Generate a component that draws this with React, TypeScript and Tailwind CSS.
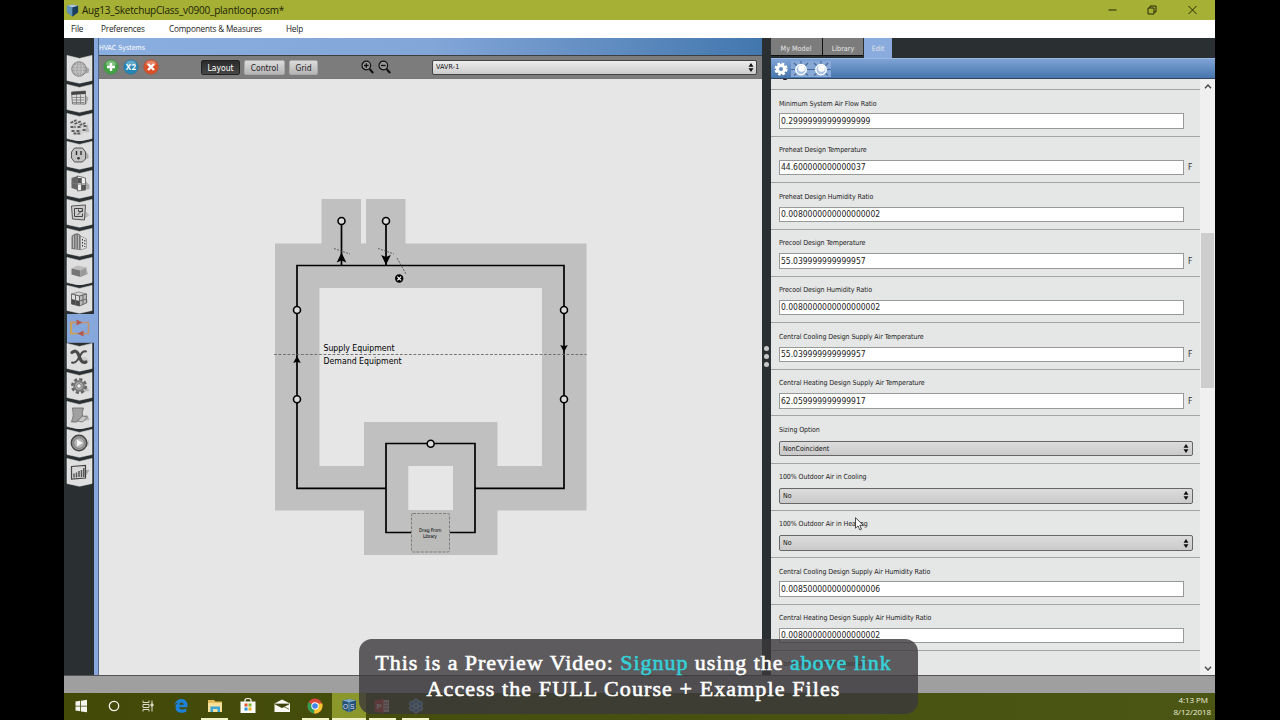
import type { ReactNode } from "react";

type Field = {
  label: string;
  value: string;
  unit?: string;
  select?: boolean;
};

const fields: Field[] = [
  { label: "Minimum System Air Flow Ratio", value: "0.29999999999999999" },
  { label: "Preheat Design Temperature", value: "44.600000000000037", unit: "F" },
  { label: "Preheat Design Humidity Ratio", value: "0.0080000000000000002" },
  { label: "Precool Design Temperature", value: "55.039999999999957", unit: "F" },
  { label: "Precool Design Humidity Ratio", value: "0.0080000000000000002" },
  { label: "Central Cooling Design Supply Air Temperature", value: "55.039999999999957", unit: "F" },
  { label: "Central Heating Design Supply Air Temperature", value: "62.059999999999917", unit: "F" },
  { label: "Sizing Option", value: "NonCoincident", select: true },
  { label: "100% Outdoor Air in Cooling", value: "No", select: true },
  { label: "100% Outdoor Air in Heating", value: "No", select: true },
  { label: "Central Cooling Design Supply Air Humidity Ratio", value: "0.0085000000000000006" },
  { label: "Central Heating Design Supply Air Humidity Ratio", value: "0.0080000000000000002" },
];

// side tab drawings, 25x28 each, centred on (12, 14)
const tabIcons: ReactNode[] = [
  <g key="site">
    <path d="M14 19l7-1 1-4-5-3z" fill="#aaa" />
    <circle cx="11.5" cy="14" r="7.3" fill="#a5a5a5" stroke="#777" strokeWidth=".8" />
    <path d="M5 11h13M4.500 14h14M5 17h13M9 7.500q-3 6 0 13M14 7.500q3 6 0 13M11.500 7v14" stroke="#d0d0d0" strokeWidth=".7" fill="none" />
  </g>,
  <g key="schedules">
    <path d="M17 10l4 4-2 6-3 1z" fill="#aaa" />
    <path d="M4 8l14-1v13H5z" fill="#ddd" stroke="#666" strokeWidth=".8" />
    <path d="M4 8l14-1v3L4 11z" fill="#444" />
    <path d="M5 13.500h12M5 16h12M5 18.500h12M9 11v9M13 11v9" stroke="#777" strokeWidth=".8" />
  </g>,
  <g key="constructions">
    <path d="M15 20l7-1-2-8z" fill="#bbb" />
    <path d="M4 10l6-3 8 3v10l-6 2-8-3z" fill="#d5d5d5" />
    <path d="M3 10l6-3M7 11l7-3M12 12l6-2M3 14h5M10 14h4M16 13h3M4 18h3M9 18h4M15 17h4M6 20.500h7" stroke="#5f5f5f" strokeWidth="1.800" strokeDasharray="3 .8" />
  </g>,
  <g key="loads">
    <path d="M14 20l7-3v-3l-4-5z" fill="#aaa" />
    <path d="M7 7h8l3 4v7l-3 3H7l-3-4v-6z" fill="#c3c3c3" stroke="#555" />
    <path d="M9 10v4M13.500 10v4" stroke="#222" strokeWidth="1.300" />
    <circle cx="11" cy="17.300" r="1.300" fill="#333" />
  </g>,
  <g key="spaces">
    <path d="M16 20l6-1v-4l-4-4z" fill="#aaa" />
    <path d="M4 8l6-2v14l-6-2z" fill="#666" />
    <path d="M10 6l8 2v12l-8 1z" fill="#eee" stroke="#555" strokeWidth=".8" />
    <path d="M4 13l6 1M14 8v12M10 14h8" stroke="#777" />
    <path d="M14 15h4v5h-4zM10.500 8h3v5h-3z" fill="#555" />
  </g>,
  <g key="geometry">
    <path d="M17 20l5-4-4-4z" fill="#bbb" />
    <path d="M4 7l14-1-1 15-12-1z" fill="#ccc" stroke="#555" />
    <path d="M7 9.500h8v3h-4v-2M7 9.500v8h8v-3M10 16l5-5" fill="none" stroke="#444" />
  </g>,
  <g key="facility">
    <path d="M4 8q5-5 9-1v15l-9-1z" fill="#777" />
    <path d="M13 8l6 3v9l-6 2z" fill="#ddd" stroke="#777" strokeWidth=".6" />
    <path d="M6 8v12M8.500 7v14M11 7v14" stroke="#c9c9c9" strokeWidth=".8" />
    <path d="M15 11v9M17.300 12v7" stroke="#333" strokeDasharray="1.500 1.500" />
  </g>,
  <g key="spacetype">
    <path d="M17 18l4-1-2-4z" fill="#bbb" />
    <path d="M4 11.500l6-3 9 2-6 3z" fill="#bcbcbc" />
    <path d="M4 11.500l9 2v6.500l-9-2.500z" fill="#757575" />
    <path d="M19 10.500l-6 3V20l6-2.500z" fill="#999" />
  </g>,
  <g key="zones">
    <path d="M17 19l4-2-2-4z" fill="#bbb" />
    <path d="M4 9l7-2 8 2-7 2z" fill="#d5d5d5" stroke="#666" strokeWidth=".6" />
    <path d="M4 9l8 2v10l-8-2z" fill="#ddd" stroke="#555" strokeWidth=".8" />
    <path d="M12 11l7-2v9l-7 3z" fill="#bbb" stroke="#555" strokeWidth=".8" />
    <path d="M4 14l8 2v5l-8-2z" fill="#4c4c4c" />
    <path d="M8 10v10M15.500 10v10M12 16l7-2" stroke="#666" />
  </g>,
  <g key="hvac" fill="none">
    <path d="M7 8.500H3.500v11H8" stroke="#c9a25c" strokeWidth="2.200" />
    <path d="M13 8.500h8v11h-6M8 19.500h3" stroke="#c7936f" strokeWidth="1.500" />
    <path d="M3 8.500h6" stroke="#c7936f" strokeWidth="1.500" />
    <path d="M9 5.500l6 3-6 3zM16 16.500l-6 3 6 3z" fill="#b55b4b" />
  </g>,
  <g key="variables">
    <path d="M13 19l9-1-4-4-5 1z" fill="#ccc" />
    <path d="M4.500 9.500q4-3 6 1l2.500 6q1.500 4 5.500 2.500" fill="none" stroke="#4a4a4a" strokeWidth="3.200" strokeLinecap="round" />
    <path d="M18.500 8.500q-3-1-5.500 3.500l-3 5q-2.500 3.500-5.500 2.500" fill="none" stroke="#4a4a4a" strokeWidth="2" strokeLinecap="round" />
  </g>,
  <g key="settings">
    <path d="M14 20l8-1-4-7z" fill="#bbb" />
    <circle cx="11.500" cy="14" r="6.700" fill="none" stroke="#666" strokeWidth="2.600" strokeDasharray="3.200 2.062" />
    <circle cx="11.500" cy="14" r="4.700" fill="#bbb" stroke="#777" strokeWidth="2" />
    <circle cx="11.500" cy="14" r="2.300" fill="#eee" stroke="#555" strokeWidth=".7" />
  </g>,
  <g key="scripts">
    <path d="M14 20l8-1-2-5-6 1z" fill="#b5b5b5" />
    <path d="M5 7h11q-2 4-1 9l-6 5H4q3-6 1-14z" fill="#a0a0a0" stroke="#666" strokeWidth=".8" />
    <path d="M10 20l5-5 5 1-5 5z" fill="#c9c9c9" stroke="#666" strokeWidth=".8" />
  </g>,
  <g key="run">
    <path d="M14 22l7-6v-5z" fill="#aaa" />
    <circle cx="11.500" cy="14" r="7.700" fill="#999" stroke="#444" strokeWidth="1.400" />
    <circle cx="11.500" cy="14" r="5.300" fill="#b5b5b5" stroke="#777" strokeWidth=".8" />
    <path d="M9.500 10.500l6 3.500-6 3.500z" fill="#f4f4f4" />
  </g>,
  <g key="results">
    <path d="M17 20l5-8h-4z" fill="#aaa" />
    <path d="M4 8.500l14-1V20l-14 1z" fill="#d8d8d8" stroke="#444" strokeWidth="1.200" />
    <path d="M6.500 19.500v-4M9 19.500v-5M11.500 19v-6M14 19v-7M16.300 19v-9" stroke="#555" strokeWidth="1.500" />
  </g>,
];

const SideTab = ({ icon, active }: { icon: ReactNode; active: boolean }) => (
  <svg className="block h-[28.8px] w-[30px]" viewBox="0 0 30 28.800">
    {active ? (
      <path d="M3 0h27v28.800H3z" fill="#86a8dc" />
    ) : (
      <path d="M3 .400l12.500 3L28 .400v25.100L15.500 28.300 3 25.500z" fill="#dfdfdf" stroke="#f5f5f5" strokeWidth=".5" />
    )}
    <g transform="translate(3.500 0)">{icon}</g>
  </svg>
);

const Spinner = () => (
  <svg className="h-[9px] w-[6px]" viewBox="0 0 6 9">
    <path d="M3 0l2.500 3.700h-5zM3 9l2.500-3.700h-5z" fill="#111" />
  </svg>
);

const Node = ({ x, y }: { x: number; y: number }) => (
  <circle cx={x} cy={y} r="3.500" fill="#dcdcdc" stroke="#000" strokeWidth="1.600" />
);

const AirLoop = () => (
  <svg className="block h-[596px] w-full" viewBox="99 79 663 596" fontFamily="'DejaVu Sans Condensed', 'Noto Sans', sans-serif">
    <path
      fill="#c0c0c0"
      fillRule="evenodd"
      d="M275 243.500h46.500V199H361v44.500h5V199h39.500v44.500h181v267h-89V555H364v-44.500h-89zM319.500 288v178H364v-44h133.500v44H542V288zM408.300 466v44H453v-44z"
    />
    <g fill="none" stroke="#000" strokeWidth="1.700">
      <path d="M386 488.300H297V265.500h267v222.800h-89" />
      <path d="M411 532.500h-25v-89h89v89h-25" />
      <path d="M341.500 221v45M386 221v45" />
    </g>
    <path d="M341.500 252.500l4.800 10-4.800-2-4.800 2zM386 265l4.800-10-4.800 2-4.800-2zM297 356l3.800 7-3.800-1.300-3.800 1.300zM564 352l3.800-7-3.800 1.300-3.800-1.300z" />
    <g fill="none" stroke="#555" strokeWidth=".9" strokeDasharray="2 1.200">
      <path d="M334 248.500l16 5.500M378 248.500l16 5.500M397 258l9 16" />
    </g>
    <path d="M274 354.500h312.500" stroke="#666" strokeWidth=".9" strokeDasharray="2.800 1.700" />
    <Node x={341.500} y={221} />
    <Node x={386} y={221} />
    <Node x={297} y={310} />
    <Node x={564} y={310} />
    <Node x={297} y={399.300} />
    <Node x={564} y={399.300} />
    <Node x={430.700} y={443.700} />
    <circle cx="399.200" cy="278.500" r="4.200" />
    <path d="M397.300 276.600l3.800 3.800M401.100 276.600l-3.800 3.800" stroke="#fff" strokeWidth="1.300" />
    <rect x="411.500" y="513.500" width="38" height="38.500" rx="1.500" fill="#bbbcba" stroke="#777" strokeWidth=".9" strokeDasharray="3 1.300" />
    <g fontSize="8.700">
      <text x="323.500" y="351" textLength="71">Supply Equipment</text>
      <text x="323.500" y="364" textLength="78">Demand Equipment</text>
    </g>
    <g fontSize="5">
      <text x="419" y="532" textLength="22.500">Drag From</text>
      <text x="423" y="538" textLength="14">Library</text>
    </g>
  </svg>
);

const FieldRow = ({ label, value, unit, select }: Field) => (
  <div
    className={
      select
        ? "flex h-[47.200px] shrink-0 flex-col border-b border-[#a4a4a4] pl-[8px]"
        : "flex h-[46.650px] shrink-0 flex-col border-b border-[#a4a4a4] pl-[8px]"
    }
  >
    <span className="mt-[7.500px] h-[15.800px] text-[7px] leading-[13px] tracking-[-0.080px] whitespace-nowrap text-[#222]">{label}</span>
    {select ? (
      <div className="mt-[1.200px] flex h-[15.500px] w-[414px] items-center justify-between rounded-[2px] border border-[#666] bg-gradient-to-b from-[#dcdcdc] to-[#cacaca] pr-[3px] pl-[3px] text-[7px] leading-none text-[#111]">
        <span className="pt-[1px]">{value}</span>
        <Spinner />
      </div>
    ) : (
      <div className="flex items-center">
        <div className="flex h-[15.500px] w-[405px] items-center border border-[#999] bg-white pl-[1px] text-[8.500px] leading-none tracking-[-0.030px] text-[#222]">
          {value}
        </div>
        <span className="ml-[4px] text-[8.500px] leading-none text-[#333]">{unit}</span>
      </div>
    )}
  </div>
);

const RoundButton = ({ fill, edge, children }: { fill: string; edge: string; children: ReactNode }) => (
  <svg className="h-[16px] w-[16px]" viewBox="0 0 16 16">
    <circle cx="8" cy="8" r="7.300" fill={fill} stroke={edge} strokeWidth=".7" />
    <ellipse cx="8" cy="4.500" rx="5" ry="3" fill="#fff" opacity=".3" />
    {children}
  </svg>
);

const Zoomer = ({ plus }: { plus?: boolean }) => (
  <svg className="h-[14px] w-[13px]" viewBox="0 0 13 14" fill="none" stroke="#111">
    <circle cx="5.300" cy="5.500" r="4.300" strokeWidth="1.200" fill="#999" />
    <path d="M8.500 9l3.700 4" strokeWidth="2" />
    <path d="M3 5.500h4.600" strokeWidth="1.400" />
    {plus && <path d="M5.300 3.200v4.600" strokeWidth="1.400" />}
  </svg>
);

const Bulb = () => (
  <svg className="h-[16px] w-[20px] bg-[#88a9d5]" viewBox="0 0 20 16">
    <path d="M0 8.500h4M16 8.500h4M3 2l3 3M17 2l-3 3M10 0v3M3 14.500L6 12M17 14.500L14 12" stroke="#426a9f" strokeWidth="1.200" />
    <circle cx="10" cy="8.700" r="5.200" fill="#a9c2e3" stroke="#fff" strokeWidth="1.400" />
    <circle cx="10.500" cy="7.500" r="3.300" fill="#fff" />
  </svg>
);

const Cube = () => (
  <svg className="h-[14px] w-[13px]" viewBox="0 0 14 14">
    <path d="M1 2.500L7 1l6 1.500v7L7 14l-6-4.500z" fill="#2e5e86" />
    <path d="M1 2.500L7 4v10L1 9.500z" fill="#5f93ba" />
    <path d="M7 4l6-1.500v7L7 14z" fill="#1c3d5c" />
    <path d="M1 2.500L7 1l6 1.500L7 4z" fill="#b5cbdb" />
  </svg>
);

const taskIcons: { name: string; art: ReactNode; open?: boolean; active?: boolean }[] = [
  { name: "start", art: <path d="M4.500 5.500l4.700-.7v4.900H4.500zM10 4.700l6-.9v5.900h-6zM4.500 10.500h4.700v4.800l-4.700-.7zM10 10.500h6v5.800l-6-.9z" fill="#f5f5f0" /> },
  { name: "cortana", art: <circle cx="10" cy="10" r="4.700" fill="none" stroke="#f5f5f0" strokeWidth="1.300" /> },
  {
    name: "taskview",
    art: (
      <g fill="none" stroke="#dcdcca">
        <path d="M5 4.500v2h6v-2M5 15.500v-2h6v2M5 8.500h6v3H5zM14 4.500v11" />
        <path d="M13 8h2v2h-2z" fill="#dcdcca" />
      </g>
    ),
  },
  {
    name: "edge",
    art: <path d="M3.500 9.500C4.500 5 7.500 3 10.500 3c4 0 6 3 6 6.700v1.500H8.200c.2 2.300 3.800 3.300 7 1.300v3.200c-4.500 2.300-10.700 1-10.700-4.500 0-2.500 1.700-4.500 4-5.200-2 .3-3.800 1.500-5 3.500zM8.300 8.700h4.400c0-3-4-3-4.400 0z" fill="#1e83d8" />,
  },
  {
    name: "explorer",
    open: true,
    art: (
      <g>
        <path d="M3 4h6l1.500 1.500H17V16H3z" fill="#e5bd5c" />
        <path d="M3 7h14v9H3z" fill="#f7e09a" />
        <path d="M5.500 16v-5.500h9.500V16h-2.500v-3H8v3z" fill="#3ba4d8" />
      </g>
    ),
  },
  {
    name: "store",
    art: (
      <g>
        <path d="M7 6V4q0-1.500 3-1.500T13 4v2" fill="none" stroke="#fff" strokeWidth="1.200" />
        <path d="M2.500 5.500h15V17h-15z" fill="#fbfbf7" />
        <path d="M6.500 7.500h3v3h-3z" fill="#e5532c" />
        <path d="M10.500 7.500h3v3h-3z" fill="#7db92b" />
        <path d="M6.500 11.500h3v3h-3z" fill="#2398d8" />
        <path d="M10.500 11.500h3v3h-3z" fill="#efb31c" />
      </g>
    ),
  },
  {
    name: "mail",
    art: (
      <g>
        <path d="M2.500 7.500L10 3.500l8 4V16H2.500z" fill="#fafaf5" />
        <path d="M3 8h14l-7 3.700zM12 10.700l5 2.500" fill="#3d430c" stroke="#3d430c" strokeWidth=".7" />
      </g>
    ),
  },
  {
    name: "chrome",
    open: true,
    art: (
      <g>
        <circle cx="10" cy="10" r="7.500" fill="#d94a3c" />
        <path d="M10 10L3.500 6.300A7.500 7.500 0 0 0 9 17.400z" fill="#2f9e54" />
        <path d="M10 10h7.500V7.500h-7L9 17.400A7.500 7.500 0 0 0 17 7.500z" fill="#f3c631" />
        <circle cx="10" cy="10" r="3.700" fill="#fff" />
        <circle cx="10" cy="10" r="2.800" fill="#4285e8" />
      </g>
    ),
  },
  {
    name: "openstudio",
    open: true,
    active: true,
    art: (
      <g>
        <path d="M3.500 4.500L10 3l7 1.500v8.500l-7 3.500L3.500 13z" fill="#24527a" />
        <path d="M3.500 4.500L10 3l7 1.500-7 1.700z" fill="#7fa9c8" />
        <path d="M10 6v10.500" stroke="#8bb" strokeWidth=".7" />
        <text x="4" y="12.500" fontSize="6.500" fill="#dde" fontFamily="Liberation Sans">O</text>
        <text x="11" y="12.500" fontSize="6.500" fill="#dde" fontFamily="Liberation Sans">S</text>
      </g>
    ),
  },
  {
    name: "powerpoint",
    open: true,
    art: (
      <g>
        <path d="M10 4h7v12h-7z" fill="#f4dcd8" />
        <path d="M12 7h4M12 10h4M12 13h4" stroke="#b33e2c" />
        <path d="M2.500 4.500L11.500 3v14l-9-1.500z" fill="#e2402e" />
        <text x="4.500" y="13" fontSize="8" fontWeight="bold" fill="#fff" fontFamily="Liberation Sans">P</text>
      </g>
    ),
  },
  {
    name: "webinar",
    open: true,
    art: (
      <g fill="#4f8fc8" stroke="#b4d8f8" strokeWidth="1">
        <circle cx="10" cy="5.500" r="2.500" />
        <circle cx="14" cy="7.800" r="2.500" />
        <circle cx="14" cy="12.300" r="2.500" />
        <circle cx="10" cy="14.500" r="2.500" />
        <circle cx="6" cy="12.300" r="2.500" />
        <circle cx="6" cy="7.800" r="2.500" />
        <circle cx="10" cy="10" r="2" />
      </g>
    ),
  },
];

const Sidebar = () => (
  <aside className="flex w-[30px] shrink-0 flex-col bg-[#2a2f31] pt-[17px]">
    {tabIcons.map((icon, i) => (
      <SideTab key={i} icon={icon} active={i === 9} />
    ))}
  </aside>
);

const LoopPanel = () => (
  <section className="flex w-[663px] shrink-0 flex-col bg-[#e6e6e6]">
    <div className="h-[17px] bg-gradient-to-r from-[#8aaee0] via-[#83a6d8] to-[#4277ae] pt-[5px] text-[7px] leading-[11px] text-white">
      HVAC Systems
    </div>
    <div className="flex h-[24px] items-center border-t border-b border-[#3c3f42] border-b-[#777] bg-[#7c7c7c] pl-[4px] text-[8.500px]">
      <RoundButton fill="#44a044" edge="#4b8a4d">
        <path d="M8 4v8M4 8h8" stroke="#fff" strokeWidth="2.400" />
      </RoundButton>
      <div className="w-[4px]" />
      <RoundButton fill="#2385b5" edge="#3d7797">
        <text x="2.700" y="11" fontSize="8" fontWeight="bold" fill="#fff" fontFamily="Open Sans" textLength="10.500">X2</text>
      </RoundButton>
      <div className="w-[4px]" />
      <RoundButton fill="#dc5028" edge="#b05540">
        <path d="M5 5l6 6M11 5l-6 6" stroke="#fff" strokeWidth="2.400" />
      </RoundButton>
      <div className="ml-[42px] flex h-[15px] items-center gap-[4px] text-center text-[#222]">
        <span className="h-[15px] w-[39px] rounded-[2px] border border-[#222] bg-gradient-to-b from-[#2c2c2c] to-[#474747] leading-[14px] text-white">Layout</span>
        <span className="h-[15px] w-[41px] rounded-[2px] border border-[#aaa] bg-gradient-to-b from-[#dcdcdc] to-[#b5b5b5] leading-[14px]">Control</span>
        <span className="h-[15px] w-[29px] rounded-[2px] border border-[#aaa] bg-gradient-to-b from-[#dcdcdc] to-[#b5b5b5] leading-[14px]">Grid</span>
      </div>
      <div className="ml-[43px] flex gap-[4px]">
        <Zoomer plus />
        <Zoomer />
      </div>
      <div className="ml-[41px] flex h-[15px] w-[325px] items-center justify-between rounded-[2px] border border-[#444] bg-gradient-to-b from-[#eee] to-[#ccc] pr-[2px] pl-[3px] text-[7px] leading-none tracking-[0.150px] text-[#111]">
        <span className="pt-[1px]">VAVR-1</span>
        <Spinner />
      </div>
    </div>
    <AirLoop />
  </section>
);

const Inspector = () => (
  <section className="flex w-[444px] shrink-0 flex-col bg-[#2a2f31]">
    <div className="flex h-[20px] text-center text-[7.200px] leading-[22px] text-[#e6e6e6]">
      <span className="h-[18px] w-[52px] border-r border-b border-[#111] bg-[#7c7c7c] pr-[1px]">My Model</span>
      <span className="h-[18px] w-[40px] border-b border-[#111] bg-[#7c7c7c]">Library</span>
      <span className="ml-px w-[28px] bg-[#8aabde]">Edit</span>
    </div>
    <div className="flex h-[21px] items-center border-t border-b border-[#9bb8e0] border-b-[#33455c] bg-gradient-to-b from-[#7fa3d6] to-[#4676ad] pl-[3px]">
      <svg className="mr-[3px] h-[14px] w-[14px]" viewBox="0 0 14 14">
        <circle cx="7" cy="7" r="5.300" fill="none" stroke="#fff" strokeWidth="2.600" strokeDasharray="2.600 1.560" />
        <circle cx="7" cy="7" r="3.500" fill="none" stroke="#fff" strokeWidth="3" />
      </svg>
      <Bulb />
      <Bulb />
    </div>
    <div className="flex h-[596px] bg-[#e5e6e6]">
      <div className="flex h-[596px] w-[429px] flex-col overflow-hidden">
        <div className="h-[11px] shrink-0 overflow-hidden border-b border-[#a4a4a4] pl-[12px]">
          <div className="h-[1px] w-[4px] rounded-b bg-[#222]" />
        </div>
        {fields.map((f) => (
          <FieldRow key={f.label} {...f} />
        ))}
        <span className="pt-[7px] pl-[8px] text-[7px] leading-[13px] whitespace-nowrap text-[#222]">Zone Maximum Outdoor Air</span>
      </div>
      <div className="flex w-[15px] flex-col items-center justify-between bg-[#f0f0f0] pt-[5px] pb-[4px]">
        <svg className="h-[5px] w-[8px]" viewBox="0 0 8 5">
          <path d="M1 4.300L4 1l3 3.300" fill="none" stroke="#444" strokeWidth="1.300" />
        </svg>
        <div className="mb-[134px] h-[155px] w-[13px] bg-[#cdcdcd]" />
        <svg className="h-[5px] w-[8px]" viewBox="0 0 8 5">
          <path d="M1 .700L4 4l3-3.300" fill="none" stroke="#444" strokeWidth="1.300" />
        </svg>
      </div>
    </div>
  </section>
);

const App = () => {
  return (
    <main className="relative flex h-[720px] w-[1280px] justify-center overflow-hidden bg-black pr-px font-['DejaVu_Sans_Condensed','Noto_Sans',sans-serif]">
      <div className="flex w-[1151px] flex-col">
        <header className="flex h-[20px] items-center bg-[#a5b034] pl-[2px]">
          <Cube />
          <span className="ml-[3px] font-['Open_Sans','Noto_Sans',sans-serif] text-[10px] leading-none tracking-[-0.200px] text-[#1c1e08]">
            Aug13_SketchupClass_v0900_plantloop.osm*
          </span>
          <svg className="mr-[18px] ml-auto h-[10px] w-[92px]" viewBox="0 0 92 10" fill="none" stroke="#252807">
            <path d="M3.500 5h8M83.500 1l8 8M91.500 1l-8 8" />
            <path d="M43 3h6v6h-6zM45 3V1h6v6h-2" />
          </svg>
        </header>
        <nav className="flex h-[18px] items-center bg-white pl-[7px] font-['Open_Sans','Noto_Sans',sans-serif] text-[8.200px] leading-none tracking-[-0.180px] text-[#222]">
          <span className="w-[30px]">File</span>
          <span className="w-[68px]">Preferences</span>
          <span className="w-[117px]">Components &amp; Measures</span>
          <span>Help</span>
        </nav>
        <div className="flex h-[637px]">
          <Sidebar />
          <div className="w-[5px] shrink-0 border-r border-[#52698c] bg-[#86a8dc]" />
          <LoopPanel />
          <div className="flex w-[9px] shrink-0 flex-col items-center justify-center gap-[3px] bg-[#2a2f31]">
            <i className="h-[5px] w-[5px] rounded-full bg-[#c8c8c8]" />
            <i className="h-[5px] w-[5px] rounded-full bg-[#c8c8c8]" />
            <i className="h-[5px] w-[5px] rounded-full bg-[#c8c8c8]" />
          </div>
          <Inspector />
        </div>
        <div className="h-[18px] border-t border-[#555] bg-[#9f9f9f]" />
        <footer className="flex h-[27px] bg-gradient-to-r from-[#434a08] to-[#4b5615]">
          {taskIcons.map(({ name, art, open, active }) => (
            <div
              key={name}
              className={active ? "flex w-[33.500px] flex-col items-center bg-[#8b972b]" : "flex w-[33.500px] flex-col items-center"}
            >
              <svg className="mt-[3px] h-[20px] w-[20px] shrink-0" viewBox="0 0 20 20">
                {art}
              </svg>
              {open && <div className={active ? "mt-[2px] h-[2px] w-full bg-[#f2f4c8]" : "mt-[2px] h-[2px] w-[27px] bg-[#f2f4c8]"} />}
            </div>
          ))}
          <div className="mt-[1px] mr-[4px] ml-auto text-right font-['Open_Sans','Noto_Sans',sans-serif] text-[8px] leading-[12.300px] tracking-[-0.050px] text-[#eef0dc]">
            <div className="pr-[3px]">4:13 PM</div>
            <div>8/12/2018</div>
          </div>
        </footer>
      </div>

      {/* mouse pointer */}
      <svg className="absolute top-[517px] left-[855px] h-[14px] w-[9px]" viewBox="0 0 9 14">
        <path d="M.500.700v10.500l2.500-2.300 1.800 4 1.700-.8-1.700-3.800h3.500z" fill="#fff" stroke="#222" strokeWidth=".8" />
      </svg>

      {/* caption */}
      <div className="absolute top-[639px] left-[359px] flex h-[75px] w-[559px] flex-col items-center rounded-[13px] bg-[#3b383c]/80 pt-[11px] pr-[10px] font-['Liberation_Serif',serif] text-[22px] leading-[26px] whitespace-nowrap text-white [-webkit-text-stroke:0.6px_currentColor]">
        <p className="tracking-[0.950px]">
          This is a Preview Video: <span className="text-[#35d0d8]">Signup</span> using the <span className="text-[#35d0d8]">above link</span>
        </p>
        <p className="tracking-[1.100px]">Access the FULL Course + Example Files</p>
      </div>
    </main>
  );
};

export default App;
